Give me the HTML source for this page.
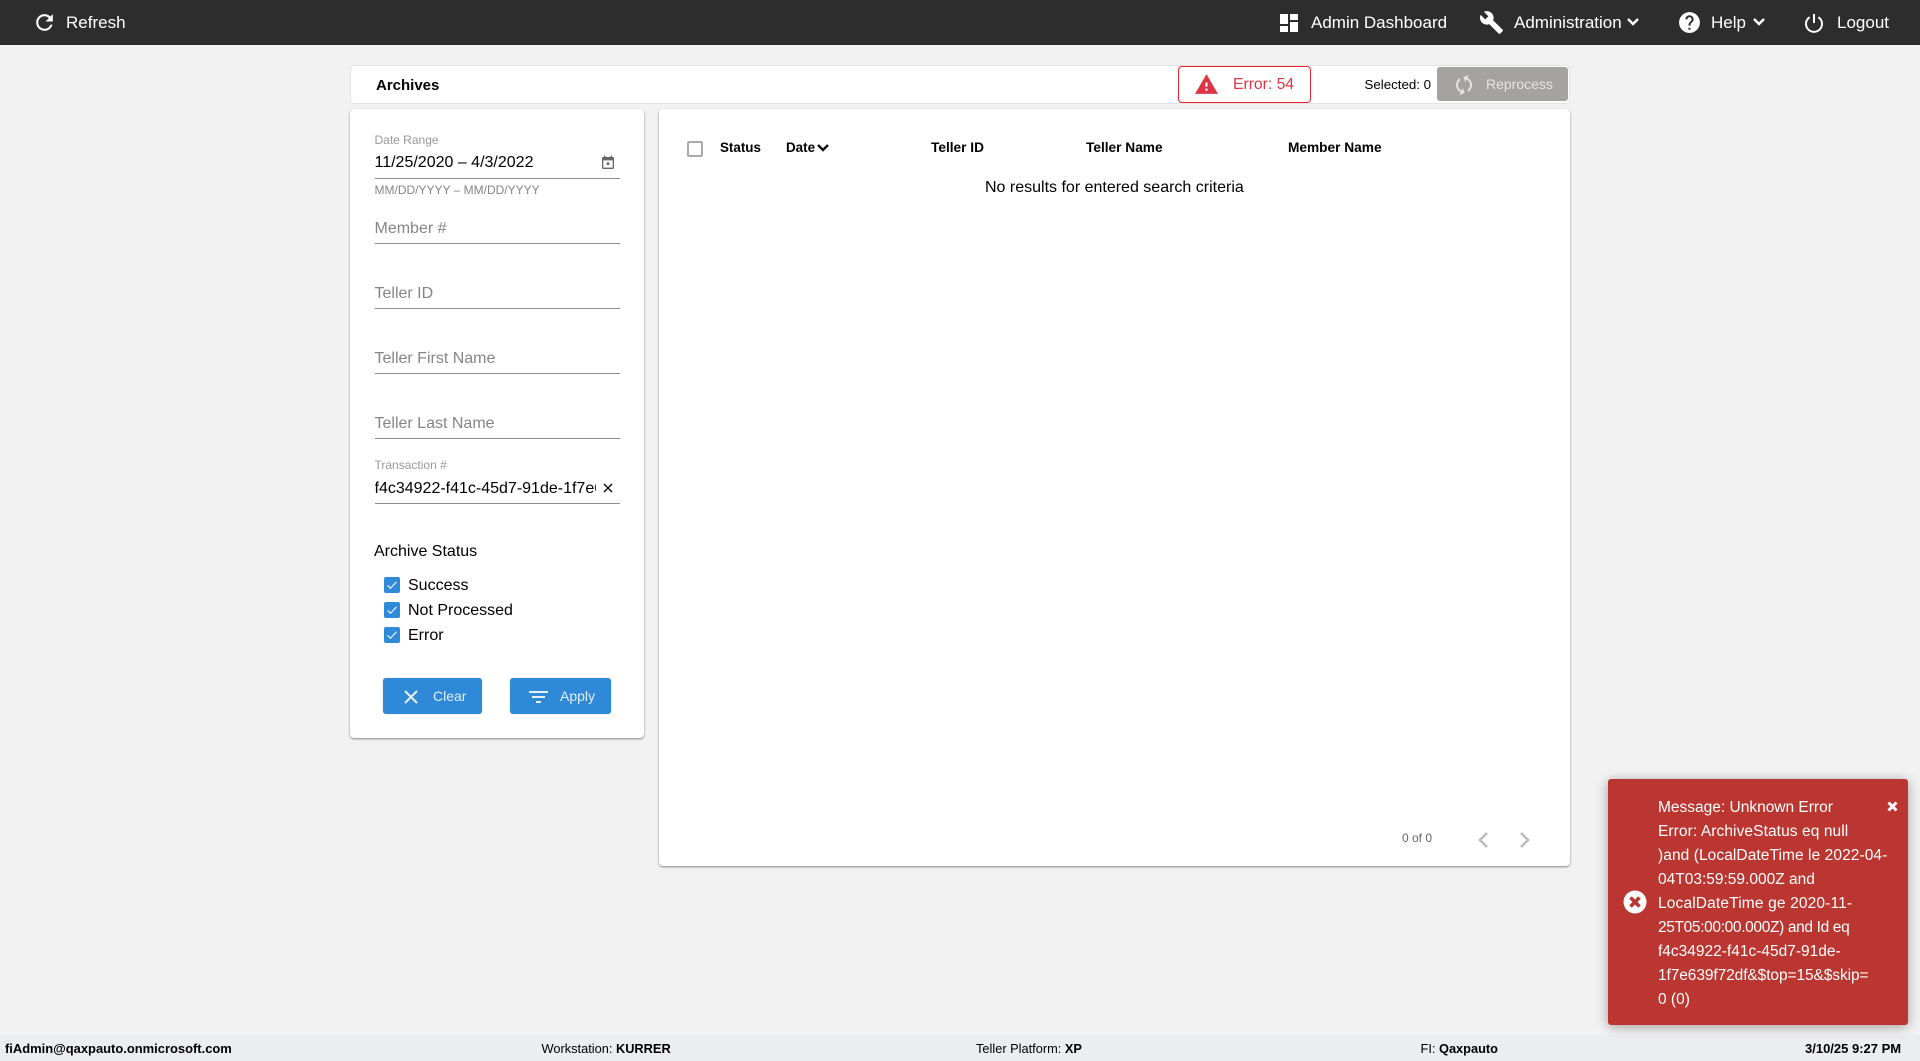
<!DOCTYPE html>
<html lang="en">
<head>
<meta charset="utf-8">
<title>Archives</title>
<style>
html,body{margin:0;padding:0;width:1920px;height:1061px;overflow:hidden;background:#f2f2f2;font-family:"Liberation Sans",Arial,sans-serif;color:#000}
.t{position:absolute;white-space:nowrap;line-height:20px;height:20px}
.a{position:absolute}
svg{position:absolute;display:block}
.nav{position:absolute;left:0;top:0;width:1920px;height:45px;background:#2d2d2d}
.nav .t{color:#fff;font-size:17px}
.card{position:absolute;background:#fff;border-radius:4px;box-shadow:0 1px 2px rgba(0,0,0,.45)}
.line{position:absolute;left:375px;width:245px;height:1px;background:#8e8e8e}
.ph{color:#858585;font-size:16px;left:374.5px}
.lab{color:#999;font-size:12px;left:374.5px}
.cb{position:absolute;left:384px;width:16px;height:16px;background:#2f8ad8;border-radius:2px}
.btn{position:absolute;top:678px;height:36px;background:#2e89d9;border-radius:3px;box-shadow:0 0 1px rgba(0,0,0,.3)}
.th{font-weight:bold;font-size:13.7px;top:137.5px}
.ft{font-size:12.8px;top:1039px}
.toast div{position:absolute;left:1658px;white-space:nowrap;color:#fff;font-size:15.5px;line-height:24px;height:24px}
</style>
</head>
<body>
<div class="nav">
  <svg style="left:32px;top:10px" width="25" height="25" viewBox="0 0 24 24" fill="#fff"><path d="M17.65 6.35C16.2 4.9 14.21 4 12 4c-4.42 0-7.99 3.58-7.99 8s3.57 8 7.99 8c3.73 0 6.84-2.55 7.73-6h-2.08c-.82 2.33-3.04 4-5.65 4-3.31 0-6-2.69-6-6s2.69-6 6-6c1.66 0 3.14.69 4.22 1.78L13 11h7V4l-2.35 2.35z"/></svg>
  <span class="t" style="left:66px;top:12.5px">Refresh</span>

  <svg style="left:1277px;top:11px" width="24" height="24" viewBox="0 0 24 24" fill="#fff"><path d="M3 13h8V3H3v10zm0 8h8v-6H3v6zm10 0h8V11h-8v10zm0-18v6h8V3h-8z"/></svg>
  <span class="t" style="left:1311px;top:12.5px">Admin Dashboard</span>

  <svg style="left:1479px;top:10px" width="25" height="25" viewBox="0 0 24 24" fill="#fff"><path d="M22.7 19l-9.1-9.1c.9-2.3.4-5-1.5-6.9-2-2-5-2.4-7.4-1.3L9 6 6 9 1.6 4.7C.4 7.1.9 10.1 2.9 12.1c1.9 1.9 4.6 2.4 6.9 1.5l9.1 9.1c.4.4 1 .4 1.4 0l2.3-2.3c.5-.4.5-1.1.1-1.4z"/></svg>
  <span class="t" style="left:1514px;top:12.5px">Administration</span>
  <svg style="left:1626px;top:16px" width="14" height="12" viewBox="0 0 14 12" fill="none" stroke="#fff" stroke-width="2.4"><path d="M2 3l5 5 5-5"/></svg>

  <svg style="left:1677px;top:10px" width="25" height="25" viewBox="0 0 24 24" fill="#fff"><path d="M12 2C6.48 2 2 6.48 2 12s4.48 10 10 10 10-4.48 10-10S17.52 2 12 2zm1 17h-2v-2h2v2zm2.07-7.75l-.9.92C13.45 12.9 13 13.5 13 15h-2v-.5c0-1.1.45-2.1 1.17-2.83l1.24-1.26c.37-.36.59-.86.59-1.41 0-1.1-.9-2-2-2s-2 .9-2 2H8c0-2.21 1.79-4 4-4s4 1.79 4 4c0 .88-.36 1.68-.93 2.25z"/></svg>
  <span class="t" style="left:1711px;top:12.5px">Help</span>
  <svg style="left:1752px;top:16px" width="14" height="12" viewBox="0 0 14 12" fill="none" stroke="#fff" stroke-width="2.4"><path d="M2 3l5 5 5-5"/></svg>

  <svg style="left:1804px;top:13px" width="20" height="20" viewBox="0 0 20 20" fill="none" stroke="#fff" stroke-width="2"><path d="M5.6 4.2a8 8 0 1 0 8.8 0"/><path d="M10 1v9"/></svg>
  <span class="t" style="left:1837px;top:12.5px">Logout</span>
</div>

<!-- title bar -->
<div class="a" style="left:350px;top:65px;width:1218px;height:37px;background:#fff;border:1px solid #e2e2e2;border-radius:4px"></div>
<span class="t" style="left:376px;top:76px;font-size:15px;font-weight:bold">Archives</span>
<div class="a" style="left:1178px;top:66px;width:131px;height:35px;border:1px solid #ee2233;border-radius:4px;background:#fff"></div>
<svg style="left:1194px;top:72px" width="25" height="25" viewBox="0 0 24 24" fill="#dc3545"><path d="M1 21h22L12 2 1 21zm12-3h-2v-2h2v2zm0-4h-2v-4h2v4z"/></svg>
<span class="t" style="left:1233px;top:75px;font-size:15.7px;color:#dc3545">Error: 54</span>
<span class="t" style="left:1364.5px;top:74.5px;font-size:13.3px">Selected: 0</span>
<div class="a" style="left:1437px;top:67px;width:131px;height:34px;background:#a5a3a2;border-radius:3px"></div>
<svg style="left:1452px;top:73px;transform:rotate(25deg)" width="24" height="24" viewBox="0 0 24 24" fill="#e4e4e4"><path d="M12 4V1L8 5l4 4V6c3.31 0 6 2.69 6 6 0 1.01-.25 1.97-.7 2.8l1.46 1.46C19.54 15.03 20 13.57 20 12c0-4.42-3.58-8-8-8zm0 14c-3.31 0-6-2.69-6-6 0-1.01.25-1.97.7-2.8L5.24 7.74C4.46 8.97 4 10.43 4 12c0 4.42 3.58 8 8 8v3l4-4-4-4v3z"/></svg>
<span class="t" style="left:1486px;top:74px;font-size:14px;color:#e4e4e4">Reprocess</span>

<!-- filter card -->
<div class="card" style="left:350px;top:109px;width:294px;height:629px"></div>
<span class="t lab" style="top:130px">Date Range</span>
<span class="t" style="left:374.5px;top:153px;font-size:16px">11/25/2020 – 4/3/2022</span>
<svg style="left:600px;top:155px" width="16" height="16" viewBox="0 0 24 24" fill="#666"><path d="M19 3h-1V1h-2v2H8V1H6v2H5c-1.11 0-1.99.9-1.99 2L3 19c0 1.1.89 2 2 2h14c1.1 0 2-.9 2-2V5c0-1.1-.9-2-2-2zm0 16H5V8h14v11zM10 11h4v4h-4z"/></svg>
<div class="line" style="top:178px"></div>
<span class="t" style="left:374.5px;top:180px;font-size:12px;color:#858585">MM/DD/YYYY – MM/DD/YYYY</span>

<span class="t ph" style="top:218.5px">Member #</span>
<div class="line" style="top:243px"></div>
<span class="t ph" style="top:283.5px">Teller ID</span>
<div class="line" style="top:308px"></div>
<span class="t ph" style="top:348.5px">Teller First Name</span>
<div class="line" style="top:373px"></div>
<span class="t ph" style="top:413.5px">Teller Last Name</span>
<div class="line" style="top:438px"></div>

<span class="t lab" style="top:455px">Transaction #</span>
<div class="a" style="left:374.5px;top:479px;width:221.5px;height:20px;overflow:hidden"><span class="t" style="left:0;top:0;font-size:16px">f4c34922-f41c-45d7-91de-1f7e639f72df</span></div>
<svg style="left:602px;top:481.5px" width="12" height="12" viewBox="0 0 12 12" stroke="#111" stroke-width="1.5" fill="none"><path d="M2 2l8 8M10 2l-8 8"/></svg>
<div class="line" style="top:503px"></div>

<span class="t" style="left:374px;top:541.5px;font-size:16px">Archive Status</span>

<div class="cb" style="top:577px"></div>
<svg style="left:384px;top:577px" width="16" height="16" viewBox="0 0 16 16" fill="none" stroke="#e8f2fb" stroke-width="1.2"><path d="M3.5 8.3l3 3 6-6.5"/></svg>
<span class="t" style="left:408px;top:576px;font-size:16px">Success</span>
<div class="cb" style="top:602px"></div>
<svg style="left:384px;top:602px" width="16" height="16" viewBox="0 0 16 16" fill="none" stroke="#e8f2fb" stroke-width="1.2"><path d="M3.5 8.3l3 3 6-6.5"/></svg>
<span class="t" style="left:408px;top:601px;font-size:16px">Not Processed</span>
<div class="cb" style="top:627px"></div>
<svg style="left:384px;top:627px" width="16" height="16" viewBox="0 0 16 16" fill="none" stroke="#e8f2fb" stroke-width="1.2"><path d="M3.5 8.3l3 3 6-6.5"/></svg>
<span class="t" style="left:408px;top:626px;font-size:16px">Error</span>

<div class="btn" style="left:383px;width:99px"></div>
<svg style="left:403px;top:689px" width="16" height="16" viewBox="0 0 16 16" fill="none" stroke="#e8f1fa" stroke-width="2"><path d="M2 2l12 12M14 2L2 14"/></svg>
<span class="t" style="left:433px;top:686px;font-size:14px;color:#e3eefa">Clear</span>
<div class="btn" style="left:510px;width:101px"></div>
<svg style="left:529px;top:691px" width="19" height="12" viewBox="0 0 19 12" fill="#e8f1fa"><rect x="0" y="0" width="19" height="2"/><rect x="3" y="5" width="13" height="2"/><rect x="7" y="10" width="5" height="2"/></svg>
<span class="t" style="left:560px;top:686px;font-size:14px;color:#e3eefa">Apply</span>

<!-- table card -->
<div class="card" style="left:659px;top:109px;width:911px;height:757px"></div>
<div class="a" style="left:687px;top:141px;width:12px;height:12px;border:2px solid #aaa;border-radius:2px"></div>
<span class="t th" style="left:720px;font-size:13.4px">Status</span>
<span class="t th" style="left:786px;font-size:13.4px">Date</span>
<svg style="left:816px;top:141.5px" width="14" height="11" viewBox="0 0 14 11" fill="none" stroke="#111" stroke-width="2.4"><path d="M2 3l5 5 5-5"/></svg>
<span class="t th" style="left:931px">Teller ID</span>
<span class="t th" style="left:1086px">Teller Name</span>
<span class="t th" style="left:1288px">Member Name</span>
<span class="t" style="left:985px;top:178px;font-size:16px">No results for entered search criteria</span>
<span class="t" style="left:1402px;top:828px;font-size:12px;color:#666">0 of 0</span>
<svg style="left:1477px;top:829.5px" width="14" height="20" viewBox="0 0 14 20" fill="none" stroke="#bbb" stroke-width="2.4"><path d="M10 3l-7 7 7 7"/></svg>
<svg style="left:1517px;top:829.5px" width="14" height="20" viewBox="0 0 14 20" fill="none" stroke="#bbb" stroke-width="2.4"><path d="M4 3l7 7-7 7"/></svg>

<!-- footer -->
<div class="a" style="left:0;top:1035px;width:1920px;height:26px;background:#ecedef"></div>
<span class="t ft" style="left:5px;font-weight:bold;font-size:12.95px">fiAdmin@qaxpauto.onmicrosoft.com</span>
<span class="t ft" style="left:541.5px">Workstation: <b>KURRER</b></span>
<span class="t ft" style="left:976px">Teller Platform: <b>XP</b></span>
<span class="t ft" style="left:1420.5px">FI: <b>Qaxpauto</b></span>
<span class="t ft" style="left:1805px;font-weight:bold;font-size:13px">3/10/25 9:27 PM</span>

<!-- toast -->
<div class="a" style="left:1608px;top:779px;width:300px;height:246px;background:#bb3630;border-radius:3px;box-shadow:0 2px 12px rgba(0,0,0,.35)"></div>
<div class="toast">
  <div style="top:795.5px">Message: Unknown Error</div>
  <div style="top:819.5px;letter-spacing:.09px">Error: ArchiveStatus eq null</div>
  <div style="top:843.5px;letter-spacing:.08px">)and (LocalDateTime le 2022-04-</div>
  <div style="top:867.5px">04T03:59:59.000Z and</div>
  <div style="top:891.5px;letter-spacing:.15px">LocalDateTime ge 2020-11-</div>
  <div style="top:915.5px;letter-spacing:-.35px">25T05:00:00.000Z) and Id eq</div>
  <div style="top:939.5px">f4c34922-f41c-45d7-91de-</div>
  <div style="top:963.5px;letter-spacing:-.09px">1f7e639f72df&amp;$top=15&amp;$skip=</div>
  <div style="top:987.5px">0 (0)</div>
</div>
<svg style="left:1887px;top:800.5px" width="11" height="11" viewBox="0 0 11 11" stroke="#fff" stroke-width="3" fill="none"><path d="M1.5 1.5l8 8M9.5 1.5l-8 8"/></svg>
<svg style="left:1623px;top:890px" width="24" height="24" viewBox="0 0 24 24"><circle cx="12" cy="12" r="11.5" fill="#fff"/><path d="M7.5 7.5l9 9M16.5 7.5l-9 9" stroke="#bb3630" stroke-width="3.6" fill="none"/></svg>
</body>
</html>
